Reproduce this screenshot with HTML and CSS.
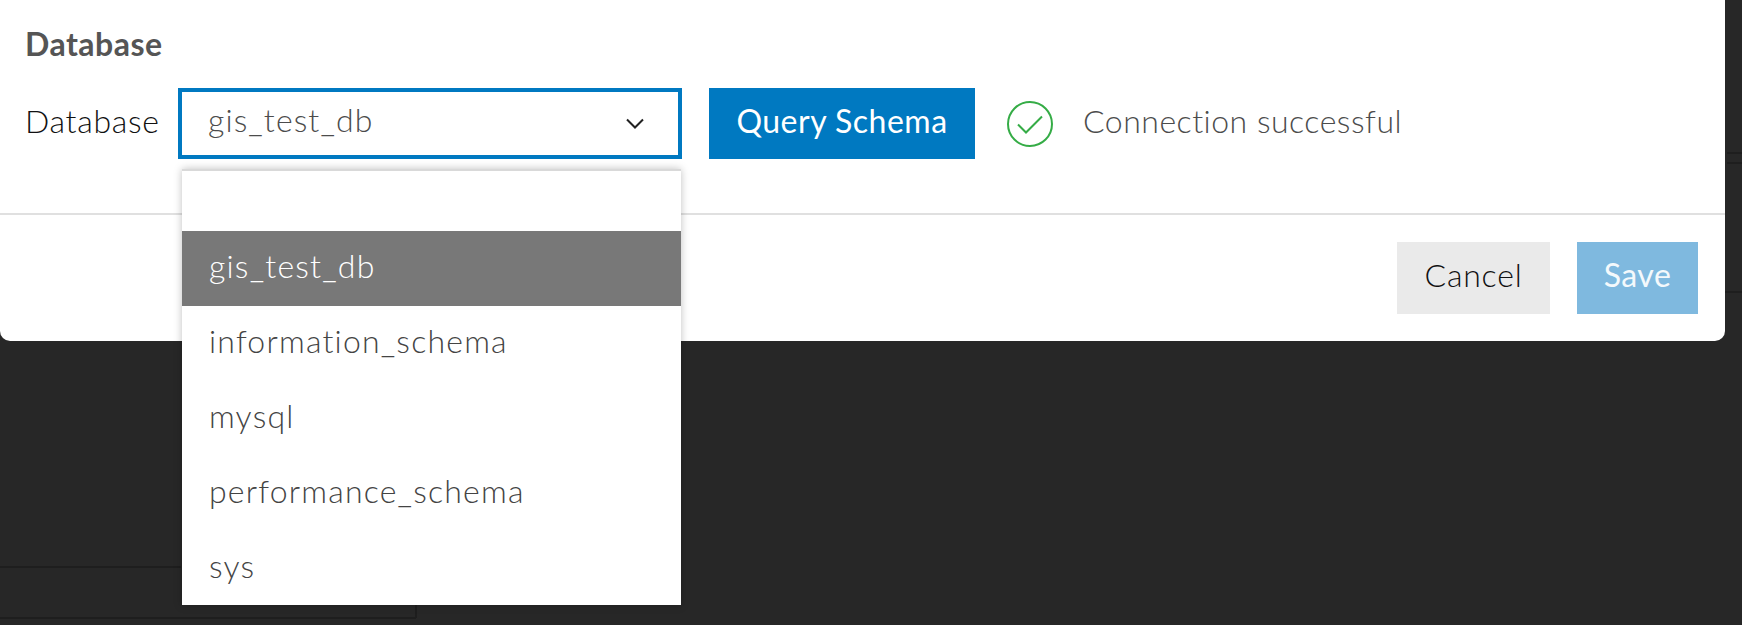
FILE: index.html
```html
<!DOCTYPE html>
<html lang="en">

<head>
    <meta charset="UTF-8">
    <title>Database connection</title>
    <link rel="stylesheet" href="styles.css">
</head>

<body>
    <div class="backdrop">
        <span class="line line-a"></span>
        <span class="line line-b"></span>
        <span class="line line-c"></span>
        <span class="line line-d"></span>
        <span class="line line-e"></span>
        <span class="line line-f"></span>
    </div>

    <section class="modal">
        <div class="modal-body">
            <h2>Database</h2>
            <div class="row">
                <label>Database</label>
                <div class="select">
                    <span>gis_test_db</span>
                    <svg class="chevron" viewBox="0 0 18 11" aria-hidden="true">
                        <path d="M1 1.5 9 9.5 17 1.5" />
                    </svg>
                    <ul class="menu">
                        <li class="empty"></li>
                        <li class="active">gis_test_db</li>
                        <li>information_schema</li>
                        <li>mysql</li>
                        <li>performance_schema</li>
                        <li>sys</li>
                    </ul>
                </div>
                <button class="btn is-primary">Query Schema</button>
                <svg class="status-icon" viewBox="0 0 46 46" aria-hidden="true">
                    <circle cx="23" cy="23" r="22" />
                    <path d="M11 23.5 19 31.500 35 15.500" />
                </svg>
                <span class="status">Connection successful</span>
            </div>
        </div>
        <footer>
            <button class="btn is-cancel">Cancel</button>
            <button class="btn is-save">Save</button>
        </footer>
    </section>
</body>

</html>
```

FILE: styles.css
```css
*,
*::before,
*::after {
    box-sizing: border-box;
    margin: 0;
    padding: 0;
}

body {
    font-family: Lato, "Open Sans", sans-serif;
    font-weight: 300;
    width: 1742px;
    height: 625px;
    overflow: hidden;
    position: relative;
    background: #272727;
}

.backdrop .line {
    position: absolute;
    background: #1e1e1e;
    height: 2px;
}

.line-a {
    left: 0;
    top: 566px;
    width: 181px;
}

.line-b {
    left: 0;
    top: 617px;
    width: 416px;
}

.line-c {
    left: 1727px;
    top: 152px;
    width: 15px;
}

.line-d {
    left: 1725px;
    top: 291px;
    width: 17px;
}

.line-e {
    left: 415px;
    top: 605px;
    width: 2px;
    height: 13px !important;
}

.line-f {
    left: 1727px;
    top: 162px;
    width: 15px;
}

.modal {
    position: relative;
    width: 1725px;
    height: 341px;
    background: #fff;
    border-radius: 0 0 10px 10px;
    display: flex;
    flex-direction: column;
}

.modal-body {
    height: 215px;
    padding: 27px 0 0 25px;
    border-bottom: 2px solid #e0e0e0;
}

h2 {
    font-size: 32px;
    font-weight: 700;
    letter-spacing: .5px;
    line-height: 34px;
    color: #555;
}

.row {
    display: flex;
    align-items: center;
    margin-top: 27px;
    height: 71px;
}

label {
    font-size: 32px;
    font-weight: 300;
    letter-spacing: .7px;
    color: #111;
    width: 153px;
    padding-bottom: 6px;
}

.select {
    position: relative;
    width: 504px;
    height: 71px;
    border: 4px solid #0079c1;
    padding: 0 26px;
    display: flex;
    align-items: center;
    justify-content: space-between;
    font-size: 32px;
    letter-spacing: 1.1px;
    color: #4c4c4c;
    margin-right: 27px;

    & > span {
        padding-bottom: 8px;
    }
}

.chevron {
    width: 18px;
    height: 11px;
    margin-right: 8px;
    fill: none;
    stroke: #222;
    stroke-width: 2;
}

.menu {
    position: absolute;
    top: 77px;
    left: 0;
    width: 499px;
    height: 436px;
    overflow: hidden;
    list-style: none;
    background: #fff;
    border-top: 2px solid #d9d9d9;
    box-shadow: 0 0 8px rgba(0, 0, 0, 0.25);
    z-index: 2;
    letter-spacing: 1.2px;
    color: #444;

    & li {
        height: 75px;
        padding: 0 0 6px 27px;
        display: flex;
        align-items: center;
    }

    & .empty {
        height: 60px;
    }

    & .active {
        background: #787878;
        color: #fff;
    }
}

.btn {
    font-family: inherit;
    font-size: 32px;
    font-weight: 400;
    letter-spacing: .5px;
    border: 0;
    height: 72px;
    padding-bottom: 8px;
}

.is-primary {
    width: 266px;
    height: 71px;
    background: #0079c1;
    color: #fff;
    margin-right: 32px;
    padding-bottom: 6px;
}

.status-icon {
    width: 46px;
    height: 46px;
    margin-right: 30px;
    fill: none;
    stroke: #35ac46;
    stroke-width: 2;
}

.status {
    font-size: 32px;
    letter-spacing: .5px;
    color: #4c4c4c;
    padding-bottom: 6px;
}

footer {
    display: flex;
    justify-content: flex-end;
    gap: 27px;
    padding: 27px 27px 0 0;
}

.is-cancel {
    width: 153px;
    background: #eaeaea;
    color: #111;
    font-weight: 300;
    letter-spacing: .8px;
}

.is-save {
    width: 121px;
    background: #7fb9df;
    color: #f4f9fc;
}
```
